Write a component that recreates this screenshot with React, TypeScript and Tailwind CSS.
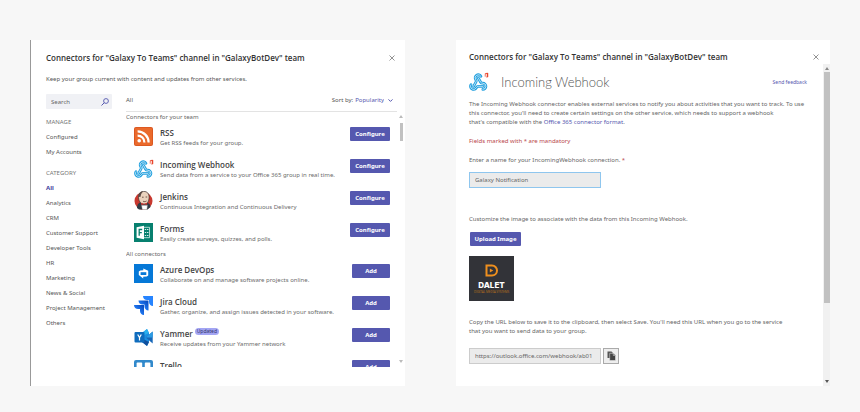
import type { ReactNode } from "react";

function WebhookIcon() {
  const arms = [
    "M18 16.98h-5.99c-1.1 0-1.95.94-2.48 1.9A4 4 0 0 1 2 17c.01-.7.2-1.4.57-2",
    "m6 17 3.13-5.78c.53-.97.1-2.18-.5-3.1a4 4 0 1 1 6.89-4.06",
    "m12 6 3.13 5.73C15.66 12.7 16.9 13 18 13a4 4 0 0 1 0 8",
  ];
  return (
    <svg viewBox="0 0 26 26" className="size-5 shrink-0" fill="none" aria-hidden="true">
      <g transform="translate(0 1.600)" strokeLinecap="round" strokeLinejoin="round">
        {arms.map((d) => (
          <path key={d} d={d} stroke="#1f9fde" strokeWidth="3.6" />
        ))}
        {arms.map((d) => (
          <path key={d} d={d} stroke="#e6f5fc" strokeWidth="1" />
        ))}
      </g>
      <path d="M20.600 2 23.400.9l1.600.5v5l-1.600.6-3.300-1.200 3 .3V2.400l-1.600.5v2.400l-1 .4z" fill="#e8452c" />
    </svg>
  );
}

function RssIcon() {
  return (
    <svg viewBox="0 0 19 19" className="size-[19px] shrink-0" aria-hidden="true">
      <rect width="19" height="19" rx="2" fill="#d9541e" />
      <rect x="0.8" y="0.8" width="17.4" height="17.4" rx="1.6" fill="#ea6a2c" />
      <circle cx="5.2" cy="13.8" r="1.8" fill="#fff" />
      <path d="M3.600 8.600a6.800 6.800 0 0 1 6.800 6.800M3.600 4.400a11 11 0 0 1 11 11" fill="none" stroke="#fff" strokeWidth="2.2" />
    </svg>
  );
}

function JenkinsIcon() {
  return (
    <svg viewBox="0 0 19 19" className="size-[19px] shrink-0" aria-hidden="true">
      <circle cx="9.5" cy="10" r="9" fill="#c8382f" />
      <path d="M3 17c0-4 2-6 6.500-6s7 2 7 5l-3 2.500H5z" fill="#2f3b45" />
      <path d="M4.500 5C5 1.800 7 .4 9.800.4c3.400 0 5.500 2.300 5.300 6-.1 4-1.900 6.900-5 6.900-3.400 0-6-3.800-5.600-8.300z" fill="#ead2bd" stroke="#3b302c" strokeWidth=".7" />
      <path d="M4.500 5.800C4.600 2 6.500.5 9 .4L7.200 3l-.8 3z" fill="#5b4a44" />
      <path d="M8 6.200h1.600M11.600 6h1.600M9 10.200c1.200.6 2.400.5 3.500-.2" stroke="#55392f" strokeWidth=".8" fill="none" />
      <path d="M7.500 14.300h6l-.6 4.500H8.300z" fill="#fff" stroke="#777" strokeWidth=".4" />
      <path d="m7 11.800 3 1 3-1 .3 2-3-.5-3 .8z" fill="#d33833" />
    </svg>
  );
}

function FormsIcon() {
  return (
    <svg viewBox="0 0 19 19" className="size-[19px] shrink-0" aria-hidden="true">
      <rect width="19" height="19" fill="#07806f" />
      <path d="M9.500 4.300h6v10.400h-6z" fill="#07806f" stroke="#d8efeb" strokeWidth=".8" />
      <path d="M10.800 6.500h1.200M12.800 6.500h1.600M10.800 9.500h1.200M12.800 9.500h1.600M10.800 12.500h1.200M12.800 12.500h1.600" stroke="#d8efeb" strokeWidth="1.100" />
      <path d="M2.600 4.200 10 2.700v13.600l-7.400-1.500z" fill="#fff" />
      <path d="M5.200 12.700V6.500h3M5.200 9.600h2.600" fill="none" stroke="#07806f" strokeWidth="1.300" />
    </svg>
  );
}

function AzureIcon() {
  return (
    <svg viewBox="0 0 19 19" className="size-[19px] shrink-0" aria-hidden="true">
      <rect width="19" height="19" fill="#0578d7" />
      <path d="M4.800 11V7.500l1.500-1 3-.2V4.600l4.900 2.200v4.700l-1.400 1-3.600.2v1.800z" fill="#fff" />
      <path d="M6.600 8.200h5.700v2.800H6.600z" fill="#0578d7" />
    </svg>
  );
}

function JiraIcon() {
  return (
    <svg viewBox="0 0 19 19" className="size-[19px] shrink-0" aria-hidden="true">
      <defs>
        <linearGradient id="jira-fold" x1="1" y1="0" x2="0.300" y2="0.700">
          <stop offset="0.200" stopColor="#0b4fc4" />
          <stop offset="1" stopColor="#2684ff" />
        </linearGradient>
      </defs>
      <path d="M9 0h10v10c-2.400 0-4-1.800-4-4V4h-2C10.800 4 9 2.400 9 0z" fill="#2684ff" />
      <path d="M4.500 4.500h10v10c-2.400 0-4-1.800-4-4v-2h-2c-2.200 0-4-1.600-4-4z" fill="url(#jira-fold)" />
      <path d="M0 9h10v10c-2.400 0-4-1.800-4-4v-2H4c-2.200 0-4-1.600-4-4z" fill="url(#jira-fold)" />
    </svg>
  );
}

function YammerIcon() {
  return (
    <svg viewBox="0 0 19 19" className="size-[19px] shrink-0" aria-hidden="true">
      <path d="M13 1 8 5v9l5 4 2-4V5z" fill="#1c8fe0" />
      <path d="m13 1 2 4-7 3V5z" fill="#2ab0ee" />
      <path d="m8 10.500 7 3.500-2 4-5-4z" fill="#114f9c" />
      <path d="m18.700 3.500-7 6 7 6z" fill="#1767b8" />
      <path d="m18.700 3.500-7 6h7z" fill="#2c9ce4" />
      <rect x="0.500" y="4" width="10" height="10.500" rx="1" fill="#0f6cbd" />
      <path d="m3.700 6.500 1.800 3 1.800-3M5.500 9.500v3" fill="none" stroke="#fff" strokeWidth="1.200" />
    </svg>
  );
}

function TrelloIcon() {
  return (
    <svg viewBox="0 0 19 19" className="size-[19px] shrink-0" aria-hidden="true">
      <rect width="19" height="19" rx="2" fill="#3189cb" />
      <rect x="2.600" y="2.600" width="5.600" height="13" rx=".8" fill="#fff" />
      <rect x="10.800" y="2.600" width="5.600" height="9" rx=".8" fill="#fff" />
    </svg>
  );
}

function SearchIcon() {
  return (
    <svg viewBox="0 0 8 8" className="size-2 shrink-0" fill="none" stroke="#5558af" aria-hidden="true">
      <circle cx="5" cy="3" r="2.400" strokeWidth=".9" />
      <path d="M3.300 4.700.500 7.500" strokeWidth="1" />
    </svg>
  );
}

function CloseButton() {
  return (
    <button type="button" aria-label="Close" className="flex size-2 items-center justify-center">
      <svg viewBox="0 0 6 6" className="size-1.5" stroke="#777" strokeWidth=".8" aria-hidden="true">
        <path d="m.500.500 5 5m0-5-5 5" />
      </svg>
    </button>
  );
}

function Arrow({ up = false, color }: { up?: boolean; color: string }) {
  return (
    <svg viewBox="0 0 4 3" className="h-[3px] w-1" fill={color} aria-hidden="true">
      <path d={up ? "M0 3 2 0l2 3z" : "M0 0h4L2 3z"} />
    </svg>
  );
}

function CopyIcon() {
  return (
    <svg viewBox="0 0 9 10" className="h-[10px] w-[9px]" aria-hidden="true">
      <path d="M.500.500h4l1 1V7h-5z" fill="#555" />
      <path d="M2.700 2.300h3.800l2 2v5.200H2.700z" fill="#444" stroke="#eee" strokeWidth=".5" />
      <path d="M6.300 2.500v2h2" fill="none" stroke="#eee" strokeWidth=".5" />
    </svg>
  );
}

type Connector = { name: string; text: string; icon: ReactNode; badge?: string };

const installed: Connector[] = [
  { name: "RSS", text: "Get RSS feeds for your group.", icon: <RssIcon /> },
  {
    name: "Incoming Webhook",
    text: "Send data from a service to your Office 365 group in real time.",
    icon: <WebhookIcon />,
  },
  { name: "Jenkins", text: "Continuous Integration and Continuous Delivery", icon: <JenkinsIcon /> },
  { name: "Forms", text: "Easily create surveys, quizzes, and polls.", icon: <FormsIcon /> },
];

const available: Connector[] = [
  { name: "Azure DevOps", text: "Collaborate on and manage software projects online.", icon: <AzureIcon /> },
  {
    name: "Jira Cloud",
    text: "Gather, organize, and assign issues detected in your software.",
    icon: <JiraIcon />,
  },
  { name: "Yammer", text: "Receive updates from your Yammer network", icon: <YammerIcon />, badge: "Updated" },
  { name: "Trello", text: "", icon: <TrelloIcon /> },
];

const categories = [
  "All",
  "Analytics",
  "CRM",
  "Customer Support",
  "Developer Tools",
  "HR",
  "Marketing",
  "News & Social",
  "Project Management",
  "Others",
];

function ConnectorRow({ item, action }: { item: Connector; action: "Configure" | "Add" }) {
  return (
    <li className="flex h-8 items-start">
      <div className="flex w-[26px] shrink-0">{item.icon}</div>
      <div className="min-w-0 flex-1 whitespace-nowrap">
        <div className="flex items-start gap-0.5">
          <h3 className="font-['Open_Sans','Noto_Sans',sans-serif] text-[8px] leading-3 font-semibold text-[#444]">
            {item.name}
          </h3>
          {item.badge && (
            <span className="rounded-full bg-[#a3a5f3] px-0.5 text-[5px] leading-[7px] text-[#33346b]">{item.badge}</span>
          )}
        </div>
        {item.text && <p className="leading-2 text-[#6b6b6b]">{item.text}</p>}
      </div>
      <button
        type="button"
        className={`h-[14px] shrink-0 rounded-[1px] bg-[#5558af] leading-[14px] font-bold text-white ${
          action === "Add" ? "w-[38px]" : "w-10"
        }`}
      >
        {action}
      </button>
    </li>
  );
}

function NavLink({ label, active = false }: { label: string; active?: boolean }) {
  return (
    <li>
      <a
        href="#"
        className={`block leading-[15px] whitespace-nowrap ${active ? "font-bold text-[#43459d]" : "text-[#555]"}`}
      >
        {label}
      </a>
    </li>
  );
}

function ConnectorList() {
  return (
    <section className="border-l border-[#999] bg-white pb-[19px] pl-[15px]">
      <header className="flex items-center justify-between pt-3 pr-[9px]">
        <h1 className="font-['Open_Sans','Noto_Sans',sans-serif] text-[8px] leading-3 font-semibold text-[#333]">
          Connectors for "Galaxy To Teams" channel in "GalaxyBotDev" team
        </h1>
        <CloseButton />
      </header>
      <p className="mt-[10px] leading-[10px] text-[#555]">
        Keep your group current with content and updates from other services.
      </p>
      <div className="mt-[10px] flex">
        <nav aria-label="Connector categories" className="w-20 shrink-0">
          <label className="flex h-[15px] w-[66px] items-center rounded-[1px] bg-[#f0f1f5] pr-[3px] pl-[5px]">
            <input
              type="search"
              aria-label="Search"
              placeholder="Search"
              className="w-0 flex-1 bg-transparent leading-2 outline-none placeholder:text-[#666]"
            />
            <SearchIcon />
          </label>
          <h2 className="mt-1.5 leading-[15px] text-[#777]">MANAGE</h2>
          <ul>
            <NavLink label="Configured" />
            <NavLink label="My Accounts" />
          </ul>
          <h2 className="mt-1.5 leading-[15px] text-[#777]">CATEGORY</h2>
          <ul>
            {categories.map((c) => (
              <NavLink key={c} label={c} active={c === "All"} />
            ))}
          </ul>
        </nav>
        <div className="min-w-0 flex-1">
          <div className="mr-2 flex h-[18px] items-start justify-between border-b border-[#e3e3e3] leading-3 text-[#555]">
            <span>All</span>
            <label className="flex items-center gap-0.5">
              Sort by:
              <span className="flex items-center gap-1 text-[#5558af]">
                <select className="field-sizing-content appearance-none bg-transparent leading-3 outline-none">
                  <option>Popularity</option>
                </select>
                <svg viewBox="0 0 5 3" className="mr-1 h-[3px] w-[5px]" fill="none" stroke="#5558af" aria-hidden="true">
                  <path d="m.500.400 2 2 2-2" />
                </svg>
              </span>
            </label>
          </div>
          <div className="flex h-[255px]">
            <div className="min-w-0 flex-1 overflow-hidden">
              <h2 className="leading-[10px] text-[#666]">Connectors for your team</h2>
              <ul className="mt-[5px] pl-2">
                {installed.map((c) => (
                  <ConnectorRow key={c.name} item={c} action="Configure" />
                ))}
              </ul>
              <h2 className="-mt-1.5 leading-[10px] text-[#666]">All connectors</h2>
              <ul className="mt-[5px] pl-2">
                {available.map((c) => (
                  <ConnectorRow key={c.name} item={c} action="Add" />
                ))}
              </ul>
            </div>
            <div className="flex w-[15px] shrink-0 flex-col items-end pt-[3px] pr-0.5 pb-1">
              <Arrow up color="#bbb" />
              <div className="mt-[5px] mb-auto h-[18px] w-[3px] bg-[#c1c1c1]" />
              <Arrow color="#bbb" />
            </div>
          </div>
        </div>
      </div>
    </section>
  );
}

function DaletLogo() {
  return (
    <div className="mt-[10px] flex size-[45px] flex-col items-center bg-[#323338] pt-2">
      <svg viewBox="0 0 13 13" className="size-[13px]" fill="none" aria-hidden="true">
        <path d="M1.500 1.500H7a5 5 0 0 1 0 10H1.500z" stroke="#ee8f1e" strokeWidth="2" />
        <path d="m4.800 4.500 3.500 2-3.500 2z" fill="#ee8f1e" />
      </svg>
      <span className="mt-1 font-[Inter,sans-serif] text-[8px] leading-[9px] font-extrabold text-white">DALET</span>
      <span className="text-[3px] leading-1 whitespace-nowrap text-[#b8701d]">DIGITAL MEDIA SYSTEMS</span>
    </div>
  );
}

function WebhookForm() {
  return (
    <section className="flex flex-col bg-white">
      <header className="flex items-center justify-between pt-[11px] pr-[10px] pb-px pl-[13px]">
        <h1 className="font-['Open_Sans','Noto_Sans',sans-serif] text-[8px] leading-3 font-semibold text-[#333]">
          Connectors for "Galaxy To Teams" channel in "GalaxyBotDev" team
        </h1>
        <CloseButton />
      </header>
      <div className="flex flex-1">
        <div className="min-w-0 flex-1 pr-4 pl-[13px] leading-[9px] text-[#666]">
          <div className="mt-2 flex items-center">
            <WebhookIcon />
            <h2 className="ml-3 flex-1 font-[Lato,sans-serif] text-[13px] leading-5 font-light text-[#555]">
              Incoming Webhook
            </h2>
            <a href="#" className="text-[5px] text-[#5558af]">
              Send feedback
            </a>
          </div>
          <p className="mt-2">
            The Incoming Webhook connector enables external services to notify you about activities that you want to
            track. To use this connector, you'll need to create certain settings on the other service, which needs to
            support a webhook
            <br />
            that's compatible with the{" "}
            <a href="#" className="inline-block text-[#5558af]">
              Office 365 connector format
            </a>
            .
          </p>
          <p className="mt-[10px] text-[#b9474c]">Fields marked with * are mandatory</p>
          <label htmlFor="connection-name" className="mt-[10px] block">
            Enter a name for your IncomingWebhook connection. <span className="text-[#b9474c]">*</span>
          </label>
          <input
            id="connection-name"
            defaultValue="Galaxy Notification"
            className="mt-[7px] block h-4 w-[132px] border border-[#8fc6ee] bg-[#ebebeb] px-[5px] outline-none"
          />
          <p className="mt-[27px]">Customize the image to associate with the data from this Incoming Webhook.</p>
          <button
            type="button"
            className="mt-2 ml-px block h-[14px] w-[51px] rounded-[1px] bg-[#5558af] font-bold text-white"
          >
            Upload Image
          </button>
          <DaletLogo />
          <label htmlFor="webhook-url" className="mt-[17px] block">
            Copy the URL below to save it to the clipboard, then select Save. You'll need this URL when you go to the
            service
            <br />
            that you want to send data to your group.
          </label>
          <div className="mt-3 flex gap-0.5">
            <input
              id="webhook-url"
              readOnly
              defaultValue="https://outlook.office.com/webhook/ab01"
              className="h-4 w-[132px] border border-[#ccc] bg-[#ebebeb] px-[5px] outline-none"
            />
            <button
              type="button"
              aria-label="Copy URL"
              className="flex size-4 items-center justify-center border border-[#aaa] bg-[#eee]"
            >
              <CopyIcon />
            </button>
          </div>
        </div>
        <div className="flex w-[7px] shrink-0 flex-col items-center bg-[#f1f1f1] pt-[3px] pb-[3px]">
          <Arrow up color="#888" />
          <div className="mt-0.5 mb-auto h-[231px] w-1.5 bg-[#c1c1c1]" />
          <Arrow color="#555" />
        </div>
      </div>
    </section>
  );
}

export default function App() {
  return (
    <main className="grid min-h-screen grid-cols-[minmax(0,375fr)_minmax(0,374fr)] content-start gap-[51px] bg-[#f7f7f7] px-[30px] pt-10 font-['Noto_Sans','Open_Sans',sans-serif] text-[6px]">
      <ConnectorList />
      <WebhookForm />
    </main>
  );
}
